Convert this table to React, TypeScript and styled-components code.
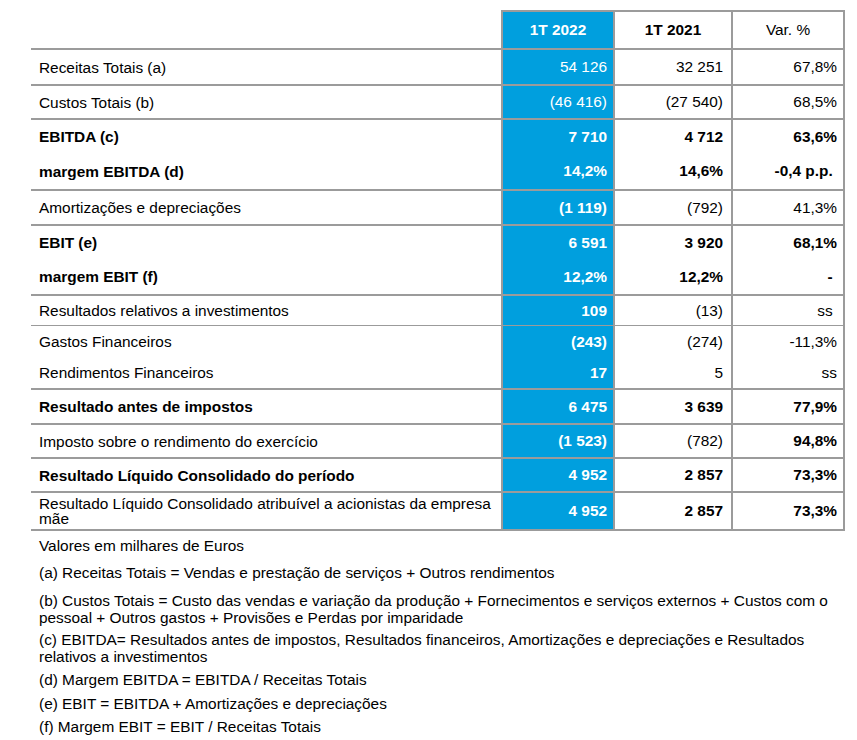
import React from "react";
import styled, { createGlobalStyle } from "styled-components";

type Sep = "thick" | "thin" | "none";

interface ResultRow {
  label: string;
  values: [string, string, string];
  bold: [boolean, boolean, boolean];
  strong?: boolean;
  sep: Sep;
  h: number;
}

const GREY = "#9b9b9b";
const BLUE = "#009fde";

const rows: ResultRow[] = [
  { label: "Receitas Totais (a)", values: ["54 126", "32 251", "67,8%"], bold: [false, false, false], sep: "thick", h: 36 },
  { label: "Custos Totais (b)", values: ["(46 416)", "(27 540)", "68,5%"], bold: [false, false, false], sep: "thick", h: 34 },
  { label: "EBITDA (c)", values: ["7 710", "4 712", "63,6%"], bold: [true, true, true], strong: true, sep: "thick", h: 35 },
  { label: "margem EBITDA (d)", values: ["14,2%", "14,6%", "-0,4 p.p.\u00a0"], bold: [true, true, true], strong: true, sep: "none", h: 36 },
  { label: "Amortizações e depreciações", values: ["(1 119)", "(792)", "41,3%"], bold: [true, false, false], sep: "thick", h: 35 },
  { label: "EBIT (e)", values: ["6 591", "3 920", "68,1%"], bold: [true, true, true], strong: true, sep: "thick", h: 35 },
  { label: "margem EBIT (f)", values: ["12,2%", "12,2%", "-\u00a0"], bold: [true, true, true], strong: true, sep: "none", h: 35 },
  { label: "Resultados relativos a investimentos", values: ["109", "(13)", "ss\u00a0"], bold: [true, false, false], sep: "thick", h: 31 },
  { label: "Gastos Financeiros", values: ["(243)", "(274)", "-11,3%"], bold: [true, false, false], sep: "thin", h: 32 },
  { label: "Rendimentos Financeiros", values: ["17", "5", "ss"], bold: [true, false, false], sep: "none", h: 31 },
  { label: "Resultado antes de impostos", values: ["6 475", "3 639", "77,9%"], bold: [true, true, true], strong: true, sep: "thick", h: 35 },
  { label: "Imposto sobre o rendimento do exercício", values: ["(1 523)", "(782)", "94,8%"], bold: [true, false, true], sep: "thick", h: 34 },
  { label: "Resultado Líquido Consolidado do período", values: ["4 952", "2 857", "73,3%"], bold: [true, true, true], strong: true, sep: "thick", h: 34 },
  { label: "Resultado Líquido Consolidado atribuível a acionistas da empresa mãe", values: ["4 952", "2 857", "73,3%"], bold: [true, true, true], sep: "thick", h: 38 },
];

const notes: { text: string; gap: number }[] = [
  { text: "Valores em milhares de Euros", gap: 10 },
  { text: "(a) Receitas Totais = Vendas e prestação de serviços + Outros rendimentos", gap: 11 },
  { text: "(b) Custos Totais = Custo das vendas e variação da produção + Fornecimentos e serviços externos + Custos com o pessoal + Outros gastos + Provisões e Perdas por imparidade", gap: 5 },
  { text: "(c) EBITDA= Resultados antes de impostos, Resultados financeiros, Amortizações e depreciações e Resultados relativos a investimentos", gap: 6 },
  { text: "(d) Margem EBITDA = EBITDA / Receitas Totais", gap: 7 },
  { text: "(e) EBIT = EBITDA + Amortizações e depreciações", gap: 6 },
  { text: "(f) Margem EBIT = EBIT / Receitas Totais", gap: 0 },
];

const pads = [6, 8, 6];

const App = () => {
  return (
    <>
      <GlobalStyle />
      <Page>
        <Table>
          <HeaderRow>
            <EmptyHead />
            <HeadCell $blue>1T 2022</HeadCell>
            <HeadCell $bold>1T 2021</HeadCell>
            <HeadCell $last>Var. %</HeadCell>
          </HeaderRow>
          {rows.map((row, i) => (
            <Row key={`row_${i}`} $sep={row.sep} $h={row.h}>
              <LabelCell $bold={!!row.strong}>{row.label}</LabelCell>
              {row.values.map((value, j) => (
                <NumCell
                  key={`cell_${i}_${j}`}
                  $blue={j === 0}
                  $last={j === 2}
                  $bold={row.bold[j]}
                  $pad={pads[j]}
                >
                  {value}
                </NumCell>
              ))}
            </Row>
          ))}
        </Table>
        <Notes>
          {notes.map((note, i) => (
            <Note key={`note_${i}`} $gap={note.gap}>{note.text}</Note>
          ))}
        </Notes>
      </Page>
    </>
  );
};

const GlobalStyle = createGlobalStyle`
  body {
    margin: 0;
    background: #fff;
    font-family: "Liberation Sans", Arial, sans-serif;
    color: #000;
  }
`;

const Page = styled.div`
  width: 857px;
  padding: 10px 0 0 31px;
  box-sizing: border-box;
`;

const Table = styled.div`
  width: 814px;
  display: flex;
  flex-direction: column;
  border-bottom: 2px solid ${GREY};
  font-size: 15.4px;
`;

const columns = "470px 112px 118px 114px";

const HeaderRow = styled.div`
  display: grid;
  grid-template-columns: ${columns};
  height: 38px;
`;

const EmptyHead = styled.div``;

const HeadCell = styled.div<{ $blue?: boolean; $bold?: boolean; $last?: boolean }>`
  display: flex;
  align-items: center;
  justify-content: center;
  box-sizing: border-box;
  border-top: 2px solid ${GREY};
  border-left: 2px solid ${GREY};
  border-right: ${(p) => (p.$last ? `2px solid ${GREY}` : "none")};
  background: ${(p) => (p.$blue ? BLUE : "#fff")};
  color: ${(p) => (p.$blue ? "#fff" : "#000")};
  font-weight: ${(p) => (p.$blue || p.$bold ? 700 : 400)};
`;

const Row = styled.div<{ $sep: Sep; $h: number }>`
  display: grid;
  grid-template-columns: ${columns};
  height: ${(p) => p.$h}px;
  box-sizing: border-box;
  border-top: ${(p) =>
    p.$sep === "thick" ? `2px solid ${GREY}` : p.$sep === "thin" ? `1px solid ${GREY}` : "none"};
`;

const LabelCell = styled.div<{ $bold: boolean }>`
  display: flex;
  align-items: center;
  padding: 0 8px 0 8px;
  line-height: 15px;
  font-weight: ${(p) => (p.$bold ? 700 : 400)};
`;

const NumCell = styled.div<{ $blue: boolean; $last: boolean; $bold: boolean; $pad: number }>`
  display: flex;
  align-items: center;
  justify-content: flex-end;
  box-sizing: border-box;
  padding-right: ${(p) => p.$pad}px;
  border-left: 2px solid ${GREY};
  border-right: ${(p) => (p.$last ? `2px solid ${GREY}` : "none")};
  background: ${(p) => (p.$blue ? BLUE : "#fff")};
  color: ${(p) => (p.$blue ? "#fff" : "#000")};
  font-weight: ${(p) => (p.$bold ? 700 : 400)};
  white-space: pre;
`;

const Notes = styled.div`
  width: 814px;
  padding: 6px 0 0 8px;
  box-sizing: border-box;
  font-size: 15.4px;
  line-height: 17px;
`;

const Note = styled.p<{ $gap: number }>`
  margin: 0 0 ${(p) => p.$gap}px;
`;

export default App;
